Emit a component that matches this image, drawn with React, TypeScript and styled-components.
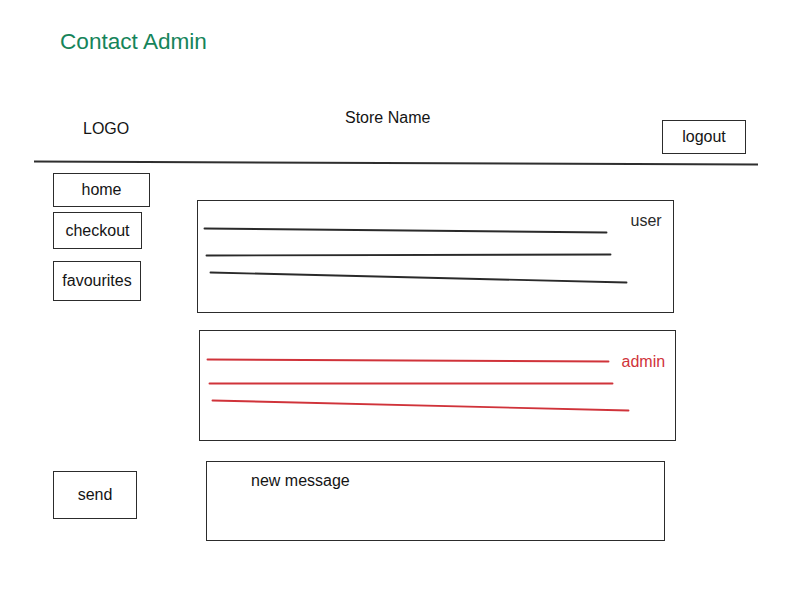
import React from 'react';
import styled, { createGlobalStyle } from 'styled-components';

const Global = createGlobalStyle`
  html, body { margin: 0; padding: 0; background: #ffffff; }
  body { font-family: "Liberation Sans", Arial, Helvetica, sans-serif; color: #141414; }
`;

const Page = styled.div`
  width: 809px;
  height: 593px;
  overflow: hidden;
  display: flex;
  flex-direction: column;
`;

const Title = styled.h1`
  margin: 31px 0 0 60px;
  font-size: 22.6px;
  line-height: 22px;
  font-weight: 400;
  color: #15845a;
`;

const Header = styled.header`
  display: flex;
  align-items: flex-start;
  margin-top: 56px;
  height: 46px;
  padding-left: 83px;
`;

const Logo = styled.div`
  width: 262px;
  margin-top: 11.5px;
  font-size: 16px;
  line-height: 16px;
`;

const StoreName = styled.div`
  width: 317px;
  margin-top: 1px;
  font-size: 16px;
  line-height: 16px;
`;

const Box = styled.div<{ $w: number; $h: number; $mt?: number; $ml?: number }>`
  box-sizing: border-box;
  width: ${p => p.$w}px;
  height: ${p => p.$h}px;
  margin-top: ${p => p.$mt ?? 0}px;
  margin-left: ${p => p.$ml ?? 0}px;
  border: 1.6px solid #2c2c2c;
  background: #fff;
`;

const ButtonBox = styled(Box)`
  display: flex;
  align-items: center;
  justify-content: center;
  font-size: 16px;
  line-height: 16px;
`;

const Divider = styled.div`
  margin: 7px 0 0 34px;
  width: 724px;
  height: 2px;
  background: #2e2e2e;
  transform: rotate(0.24deg);
`;

const Body = styled.main`
  display: grid;
  grid-template-columns: 144px 1fr;
  margin-left: 53px;
`;

const Nav = styled.nav`
  display: flex;
  flex-direction: column;
  align-items: flex-start;
  margin-top: 9px;
`;

const Threads = styled.section`
  display: flex;
  flex-direction: column;
  align-items: flex-start;
  margin-top: 36px;
`;

const ThreadBox = styled(Box)`
  display: flex;
  align-items: flex-start;
`;

const Lines = styled.svg`
  flex: none;
  overflow: visible;
`;

const ThreadLabel = styled.span<{ $top: number; $color: string }>`
  margin-top: ${p => p.$top}px;
  font-size: 16px;
  line-height: 16px;
  color: ${p => p.$color};
`;

const MessageBox = styled(Box)`
  padding: 11px 0 0 44px;
  font-size: 16px;
  line-height: 16px;
`;

type Seg = [number, number, number, number];

function Thread(props: {
  w: number; h: number; mt?: number; ml?: number;
  label: string; color: string; labelLeft: number; labelTop: number; segs: Seg[];
}) {
  const { w, h, mt, ml, label, color, labelLeft, labelTop, segs } = props;
  return (
    <ThreadBox $w={w} $h={h} $mt={mt} $ml={ml}>
      <Lines width={labelLeft - 1.5} height={h - 3} viewBox={`1.5 1.5 ${labelLeft - 1.5} ${h - 3}`}>
        {segs.map(([x1, y1, x2, y2], i) => (
          <line key={i} x1={x1} y1={y1} x2={x2} y2={y2} stroke={color} strokeWidth={1.9} strokeLinecap="round" />
        ))}
      </Lines>
      <ThreadLabel $top={labelTop} $color={color}>{label}</ThreadLabel>
    </ThreadBox>
  );
}

export default function App() {
  return (
    <Page>
      <Global />
      <Title>Contact Admin</Title>
      <Header>
        <Logo>LOGO</Logo>
        <StoreName>Store Name</StoreName>
        <ButtonBox $w={84} $h={34} $mt={11}>logout</ButtonBox>
      </Header>
      <Divider />
      <Body>
        <Nav>
          <ButtonBox $w={97} $h={34}>home</ButtonBox>
          <ButtonBox $w={89} $h={37} $mt={5}>checkout</ButtonBox>
          <ButtonBox $w={88} $h={40} $mt={12}>favourites</ButtonBox>
        </Nav>
        <Threads>
          <Thread
            w={477} h={113}
            label="user" color="#2a2a2a" labelLeft={434} labelTop={11.5}
            segs={[[8, 29, 410, 33], [10, 56, 414, 55], [14, 73, 430, 83]]}
          />
          <Thread
            w={477} h={111} mt={17} ml={2}
            label="admin" color="#d0333a" labelLeft={423} labelTop={23}
            segs={[[9, 30, 410, 32], [11, 54, 414, 54], [14, 71, 430, 81]]}
          />
        </Threads>
        <ButtonBox $w={84} $h={48} $mt={30}>send</ButtonBox>
        <MessageBox $w={459} $h={80} $mt={20} $ml={9}>new message</MessageBox>
      </Body>
    </Page>
  );
}
